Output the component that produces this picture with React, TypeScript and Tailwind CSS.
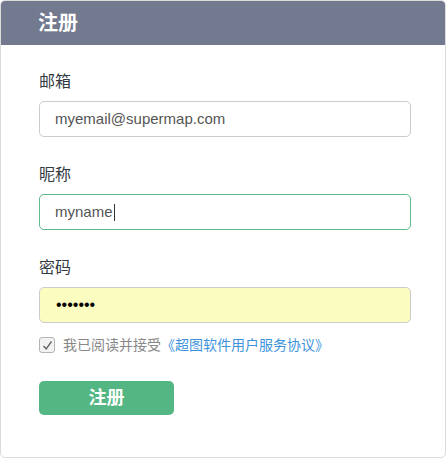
import React from "react";

export default function App() {
  const font = { fontFamily: '"Liberation Sans", Arial, "Noto Sans CJK SC", sans-serif' };
  return (
    <div className="w-[447px] h-[459px] bg-white" style={font}>
      <div className="w-[446px] h-[458px] border border-[#dcdcdc] rounded-[5px] overflow-hidden bg-white">
        <div className="h-[44px] bg-[#737a8f] flex items-center pl-[37px]">
          <span className="text-white text-[20px] font-bold leading-none">注册</span>
        </div>
        <div className="pl-[38px] pr-[34px] pt-[27px]">
          <div className="text-[16px] leading-[20px] text-[#333a44] mb-[9px]">邮箱</div>
          <div className="h-[36px] w-[372px] border border-[#cccccc] rounded-[5px] flex items-center pl-[15px] text-[15px] text-[#555]">
            myemail@supermap.com
          </div>
          <div className="text-[16px] leading-[20px] text-[#333a44] mt-[28px] mb-[9px]">昵称</div>
          <div className="h-[36px] w-[372px] border border-[#5cbb88] rounded-[5px] flex items-center pl-[15px] text-[15px] text-[#555]">
            myname<span className="inline-block w-px h-[17px] bg-[#333] ml-px"></span>
          </div>
          <div className="text-[16px] leading-[20px] text-[#333a44] mt-[28px] mb-[9px]">密码</div>
          <div className="h-[36px] w-[372px] border border-[#cccccc] bg-[#fafdbf] rounded-[5px] flex items-center pl-[16px] text-[16px] text-black">
            •••••••
          </div>
          <div className="flex items-center mt-[14px] h-[16px]">
            <div className="w-[16px] h-[16px] border border-[#b5b5b5] rounded-[3px] bg-[#f2f2f2] flex items-center justify-center">
              <svg width="11" height="11" viewBox="0 0 11 11">
                <path d="M1.5 6 L4.2 8.8 L9.5 1.5" fill="none" stroke="#666" strokeWidth="1.4" />
              </svg>
            </div>
            <span className="ml-[8px] text-[14px] text-[#888]">我已阅读并接受</span>
            <span className="text-[14px] text-[#3d93db]">《超图软件用户服务协议》</span>
          </div>
          <div className="mt-[28px] w-[135px] h-[34px] bg-[#54b783] rounded-[5px] flex items-center justify-center text-white text-[18px] font-bold">
            注册
          </div>
        </div>
      </div>
    </div>
  );
}
